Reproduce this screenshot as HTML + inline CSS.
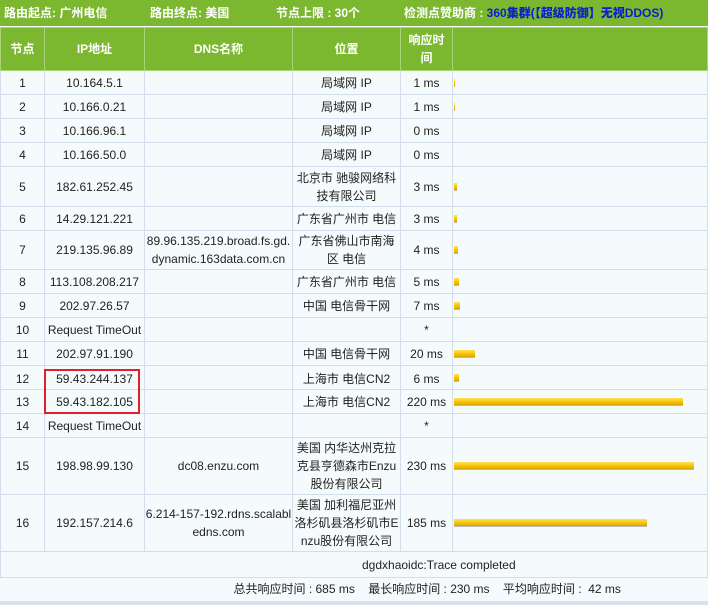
<!DOCTYPE html>
<html><head><meta charset="utf-8"><style>
*{margin:0;padding:0;box-sizing:border-box}
body{width:708px;height:605px;background:#f5fafc;font-family:"Liberation Sans","Noto Sans CJK SC",sans-serif;font-size:12px;color:#222;position:relative;overflow:hidden}
.top{position:absolute;left:0;top:0;width:708px;height:26px;background:#7cb82f;color:#fff;font-weight:bold;font-size:12px;line-height:26px}
.top span{position:absolute;top:0}
.top b{color:#0a1fd0}
table{position:absolute;left:0;top:27px;border-collapse:collapse;width:708px;table-layout:fixed}
td,th{border:1px solid #d3deec;text-align:center;vertical-align:middle;line-height:18px;padding:0}
th{background:#7cb82f;color:#fff;font-weight:bold;border-color:#a8d47a;height:43px}
td.b{text-align:left;padding-left:1px}
.bar{display:block;height:8px;background:linear-gradient(#ffe15a,#f4c200 60%,#d9a400);border-bottom:1px solid #b9b9b9}
.red{position:absolute;left:44px;top:369px;width:96px;height:45px;border:2px solid #e0202a}
.btm{position:absolute;left:0;top:601px;width:708px;height:4px;background:#d9e1ec}
.r12 td{padding-top:3px}
.r12 td.b{padding-top:0}
</style></head><body>
<div class="top"><span style="left:4px">路由起点: 广州电信</span><span style="left:150px">路由终点: 美国</span><span style="left:276px">节点上限 : 30个</span><span style="left:404px">检测点赞助商 : <b>360集群(【超级防御】无视DDOS)</b></span></div>
<table>
<colgroup><col style="width:44px"><col style="width:100px"><col style="width:148px"><col style="width:108px"><col style="width:52px"><col></colgroup>
<tr><th>节点</th><th>IP地址</th><th>DNS名称</th><th>位置</th><th>响应时<br>间</th><th></th></tr>
<tr style="height:24px"><td>1</td><td>10.164.5.1</td><td></td><td>局域网 IP</td><td>1 ms</td><td class="b"><i class="bar" style="width:1px"></i></td></tr>
<tr style="height:24px"><td>2</td><td>10.166.0.21</td><td></td><td>局域网 IP</td><td>1 ms</td><td class="b"><i class="bar" style="width:1px"></i></td></tr>
<tr style="height:24px"><td>3</td><td>10.166.96.1</td><td></td><td>局域网 IP</td><td>0 ms</td><td></td></tr>
<tr style="height:24px"><td>4</td><td>10.166.50.0</td><td></td><td>局域网 IP</td><td>0 ms</td><td></td></tr>
<tr style="height:40px"><td>5</td><td>182.61.252.45</td><td></td><td>北京市 驰骏网络科<br>技有限公司</td><td>3 ms</td><td class="b"><i class="bar" style="width:3px"></i></td></tr>
<tr style="height:24px"><td>6</td><td>14.29.121.221</td><td></td><td>广东省广州市 电信</td><td>3 ms</td><td class="b"><i class="bar" style="width:3px"></i></td></tr>
<tr style="height:39px"><td>7</td><td>219.135.96.89</td><td>89.96.135.219.broad.fs.gd.<br>dynamic.163data.com.cn</td><td>广东省佛山市南海<br>区 电信</td><td>4 ms</td><td class="b"><i class="bar" style="width:4px"></i></td></tr>
<tr style="height:24px"><td>8</td><td>113.108.208.217</td><td></td><td>广东省广州市 电信</td><td>5 ms</td><td class="b"><i class="bar" style="width:5px"></i></td></tr>
<tr style="height:24px"><td>9</td><td>202.97.26.57</td><td></td><td>中国 电信骨干网</td><td>7 ms</td><td class="b"><i class="bar" style="width:6px"></i></td></tr>
<tr style="height:24px"><td>10</td><td>Request TimeOut</td><td></td><td></td><td>*</td><td></td></tr>
<tr style="height:24px"><td>11</td><td>202.97.91.190</td><td></td><td>中国 电信骨干网</td><td>20 ms</td><td class="b"><i class="bar" style="width:21px"></i></td></tr>
<tr class="r12" style="height:24px"><td>12</td><td>59.43.244.137</td><td></td><td>上海市 电信CN2</td><td>6 ms</td><td class="b"><i class="bar" style="width:5px"></i></td></tr>
<tr style="height:24px"><td>13</td><td>59.43.182.105</td><td></td><td>上海市 电信CN2</td><td>220 ms</td><td class="b"><i class="bar" style="width:229px"></i></td></tr>
<tr style="height:24px"><td>14</td><td>Request TimeOut</td><td></td><td></td><td>*</td><td></td></tr>
<tr style="height:57px"><td>15</td><td>198.98.99.130</td><td>dc08.enzu.com</td><td>美国 内华达州克拉<br>克县亨德森市Enzu<br>股份有限公司</td><td>230 ms</td><td class="b"><i class="bar" style="width:240px"></i></td></tr>
<tr style="height:57px"><td>16</td><td>192.157.214.6</td><td>6.214-157-192.rdns.scalabl<br>edns.com</td><td>美国 加利福尼亚州<br>洛杉矶县洛杉矶市E<br>nzu股份有限公司</td><td>185 ms</td><td class="b"><i class="bar" style="width:193px"></i></td></tr>
<tr style="height:26px"><td colspan="6" style="text-align:left;padding-left:361px">dgdxhaoidc:Trace completed</td></tr>
<tr style="height:22px"><td colspan="6" style="border:none;text-align:left;padding-left:233px">总共响应时间 : 685 ms &nbsp;&nbsp; 最长响应时间 : 230 ms &nbsp;&nbsp; 平均响应时间 :&nbsp; 42 ms</td></tr>
</table>
<div class="red"></div>
<div class="btm"></div>
</body></html>
